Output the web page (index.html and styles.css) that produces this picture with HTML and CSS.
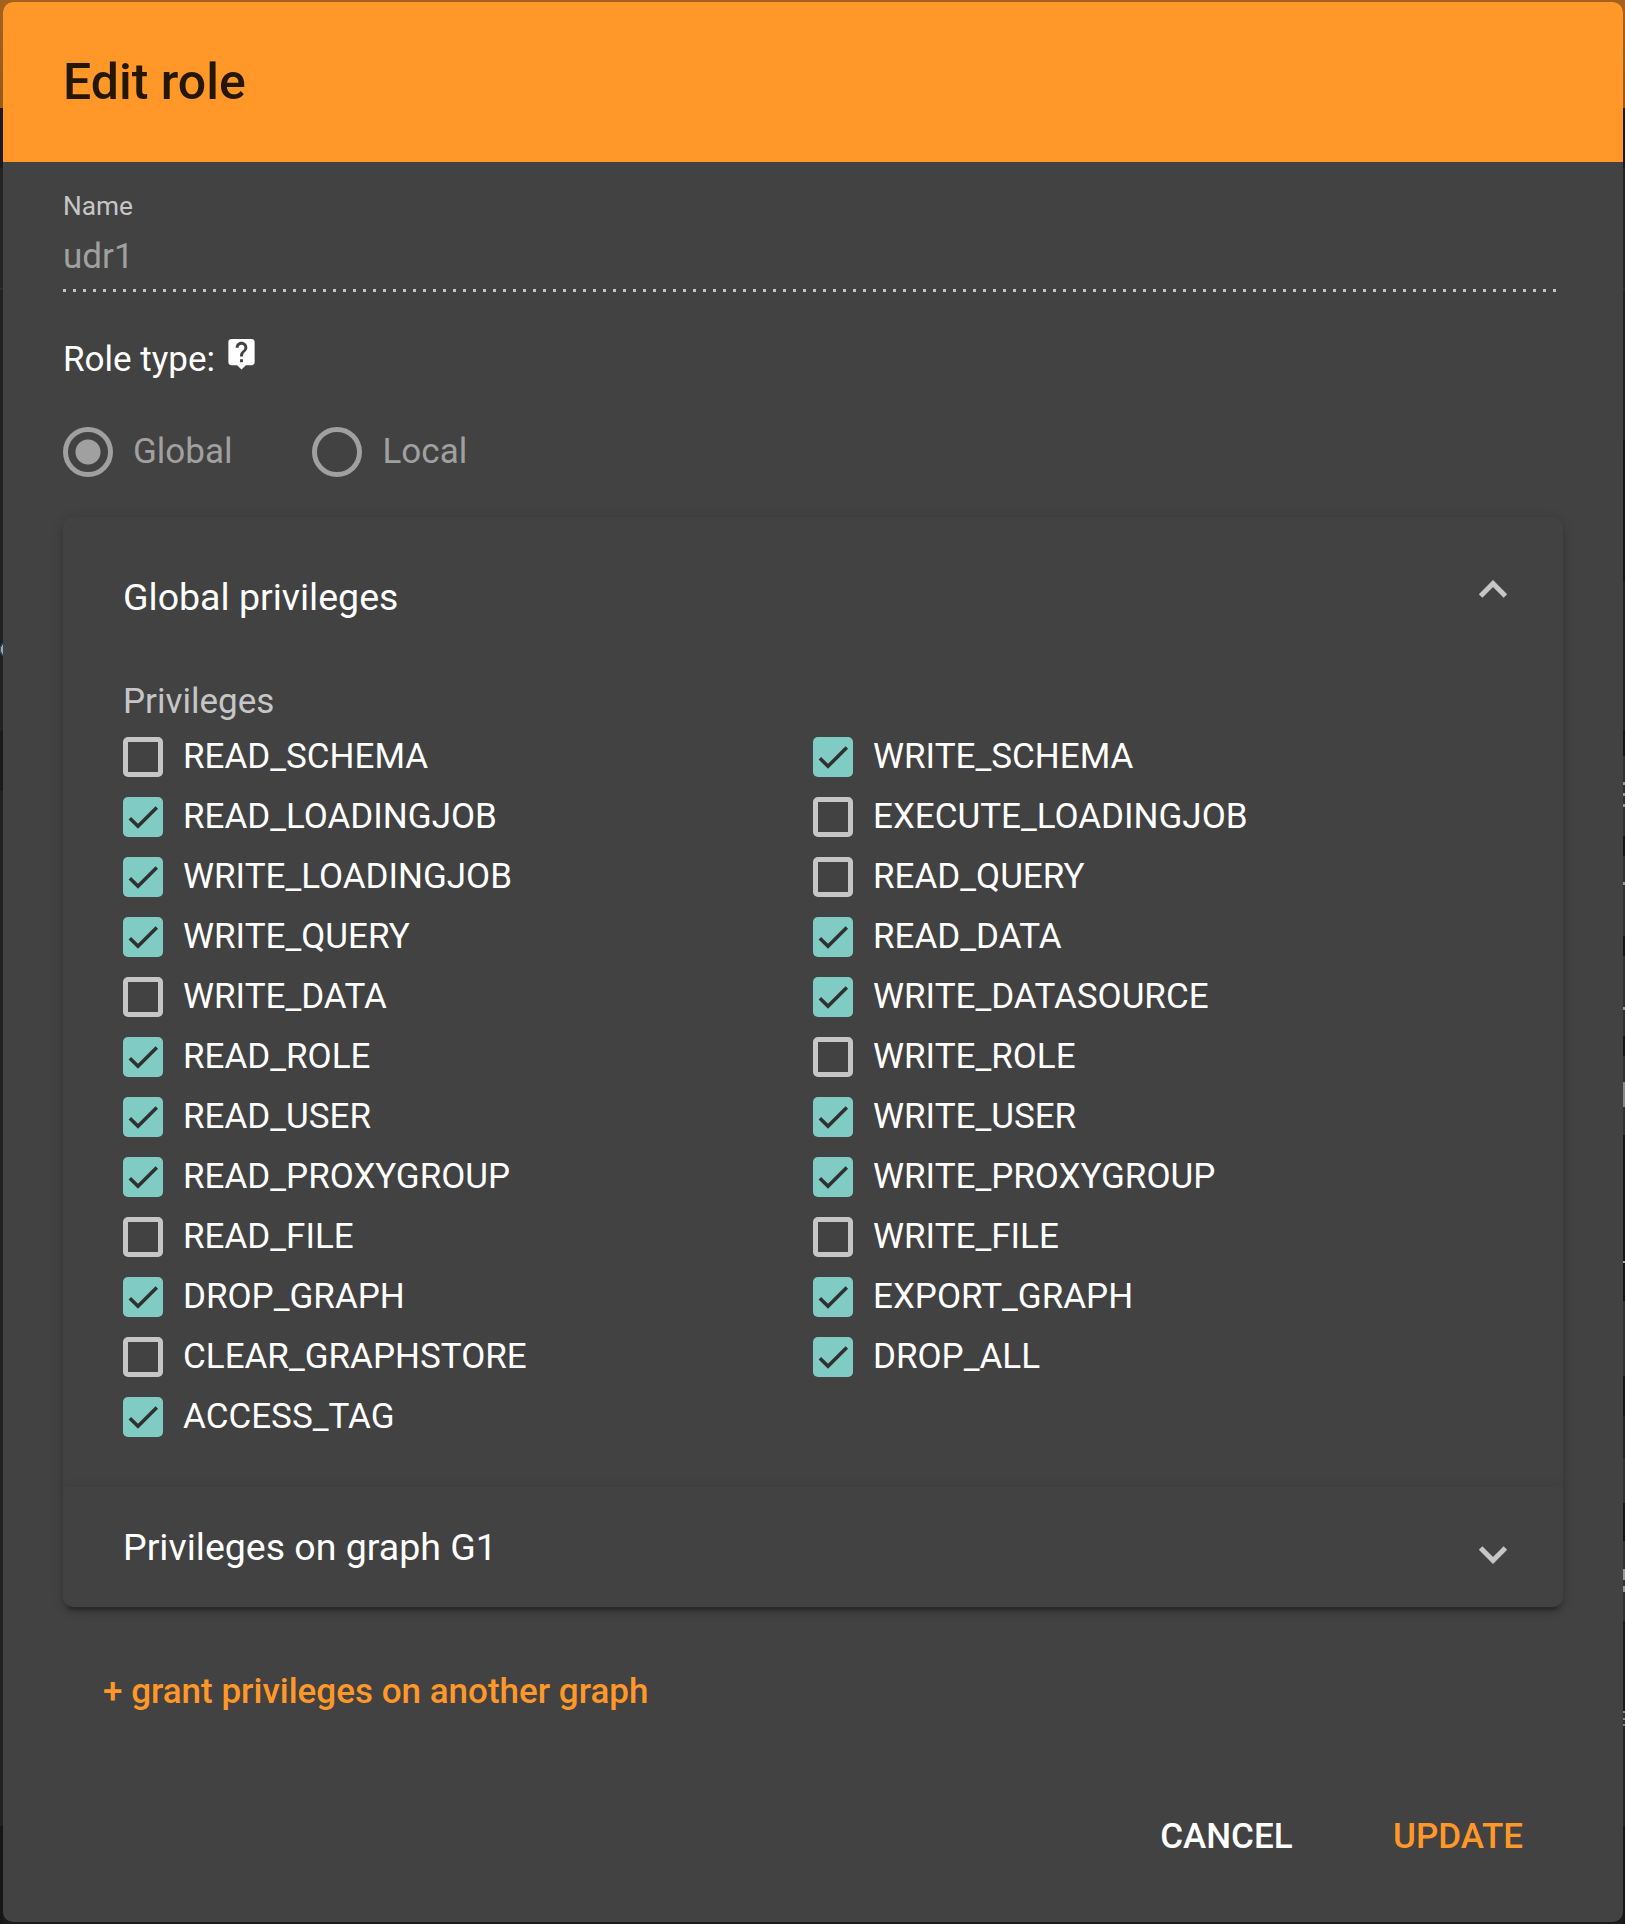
FILE: index.html
```html
<!DOCTYPE html>
<html lang="en">
<head>
<meta charset="utf-8">
<title>Edit role</title>
<link rel="stylesheet" href="styles.css">
</head>
<body>
<svg class="defs" aria-hidden="true">
  <symbol id="check" viewBox="0 0 24 24"><path d="M4.1 12.7 9 17.6 20.3 6.3" fill="none" stroke="#303030" stroke-width="2.13"/></symbol>
</svg>
<div class="backdrop-edge left"></div>
<main class="dialog">
  <header class="dialog-header"><h1>Edit role</h1></header>
  <div class="content">
    <div class="field">
      <label class="field-label">Name</label>
      <div class="field-value">udr1</div>
      <div class="field-underline"></div>
    </div>
    <div class="role-type">
      <span>Role type:</span>
      <svg class="help" viewBox="0 0 24 24"><path fill="#fff" d="M19 2H5c-1.11 0-2 .9-2 2v14c0 1.1.89 2 2 2h4l3 3 3-3h4c1.1 0 2-.9 2-2V4c0-1.1-.9-2-2-2zm-6 16h-2v-2h2v2zm2.07-7.75l-.9.92C13.45 11.9 13 12.5 13 14h-2v-.5c0-1.1.45-2.1 1.17-2.83l1.24-1.26c.37-.36.59-.86.59-1.41 0-1.1-.9-2-2-2s-2 .9-2 2H8c0-2.21 1.79-4 4-4s4 1.79 4 4c0 .88-.36 1.68-.93 2.25z"/></svg>
    </div>
    <div class="radios">
      <div class="radio"><span class="circle selected"></span><span>Global</span></div>
      <div class="radio"><span class="circle"></span><span>Local</span></div>
    </div>
    <section class="accordion">
      <div class="panel open">
        <div class="panel-header">
          <h2>Global privileges</h2>
          <svg class="chevron up" viewBox="0 0 30 18"><path d="M2.6 15.9 15 3.5 27.4 15.9"/></svg>
        </div>
        <div class="panel-body">
          <div class="caption">Privileges</div>
          <div class="grid">
            <div class="item"><span class="box"></span><span>READ_SCHEMA</span></div>
            <div class="item"><span class="box on"><svg><use href="#check"/></svg></span><span>WRITE_SCHEMA</span></div>
            <div class="item"><span class="box on"><svg><use href="#check"/></svg></span><span>READ_LOADINGJOB</span></div>
            <div class="item"><span class="box"></span><span>EXECUTE_LOADINGJOB</span></div>
            <div class="item"><span class="box on"><svg><use href="#check"/></svg></span><span>WRITE_LOADINGJOB</span></div>
            <div class="item"><span class="box"></span><span>READ_QUERY</span></div>
            <div class="item"><span class="box on"><svg><use href="#check"/></svg></span><span>WRITE_QUERY</span></div>
            <div class="item"><span class="box on"><svg><use href="#check"/></svg></span><span>READ_DATA</span></div>
            <div class="item"><span class="box"></span><span>WRITE_DATA</span></div>
            <div class="item"><span class="box on"><svg><use href="#check"/></svg></span><span>WRITE_DATASOURCE</span></div>
            <div class="item"><span class="box on"><svg><use href="#check"/></svg></span><span>READ_ROLE</span></div>
            <div class="item"><span class="box"></span><span>WRITE_ROLE</span></div>
            <div class="item"><span class="box on"><svg><use href="#check"/></svg></span><span>READ_USER</span></div>
            <div class="item"><span class="box on"><svg><use href="#check"/></svg></span><span>WRITE_USER</span></div>
            <div class="item"><span class="box on"><svg><use href="#check"/></svg></span><span>READ_PROXYGROUP</span></div>
            <div class="item"><span class="box on"><svg><use href="#check"/></svg></span><span>WRITE_PROXYGROUP</span></div>
            <div class="item"><span class="box"></span><span>READ_FILE</span></div>
            <div class="item"><span class="box"></span><span>WRITE_FILE</span></div>
            <div class="item"><span class="box on"><svg><use href="#check"/></svg></span><span>DROP_GRAPH</span></div>
            <div class="item"><span class="box on"><svg><use href="#check"/></svg></span><span>EXPORT_GRAPH</span></div>
            <div class="item"><span class="box"></span><span>CLEAR_GRAPHSTORE</span></div>
            <div class="item"><span class="box on"><svg><use href="#check"/></svg></span><span>DROP_ALL</span></div>
            <div class="item"><span class="box on"><svg><use href="#check"/></svg></span><span>ACCESS_TAG</span></div>
          </div>
        </div>
      </div>
      <div class="panel closed">
        <div class="panel-header">
          <h2>Privileges on graph G1</h2>
          <svg class="chevron down" viewBox="0 0 30 18"><path d="M2.6 2.1 15 14.5 27.4 2.1"/></svg>
        </div>
      </div>
    </section>
    <button class="btn grant">+ grant privileges on another graph</button>
  </div>
  <footer class="actions">
    <button class="btn cancel">CANCEL</button>
    <button class="btn update">UPDATE</button>
  </footer>
</main>
<div class="backdrop-edge right"></div>
</body>
</html>
```
FILE: styles.css
```css
* { box-sizing: border-box; }
body {
  margin: 0;
  width: 1625px;
  height: 1924px;
  overflow: hidden;
  display: flex;
  background: linear-gradient(#a5611e 0 2px, #965a1a 108px, #1a1a1a 108px);
  font-family: Roboto, sans-serif;
  font-size: 35px;
  line-height: 40px;
  color: #fff;
}
.defs { position: absolute; width: 0; height: 0; }
.backdrop-edge { height: 1924px; flex: none; }
.left {
  width: 3px;
  background: radial-gradient(ellipse 5px 8px at 5px 649.5px, #a5a5a5 0 75%, #24507a 80% 98%, transparent 100%),
    linear-gradient(transparent 108px, #1a1a1a 108px 168px, #242424 168px 288px, #2c2c2c 288px 290px, #212121 290px 731px, #1a1a1a 731px 791px, #212121 791px 1826px, #161616 1826px);
}
.right {
  width: 2px;
  background: linear-gradient(transparent 108px, #1a1a1a 108px 168px, #242424 168px 288px, #2c2c2c 288px 290px, #212121 290px 440px, #141414 440px 581px, #202020 581px 730px, #141414 730px 756px, #303030 756px 782px, #999 782px 785px, #303030 785px 793px, #999 793px 796px, #303030 796px 804px, #999 804px 807px, #303030 807px 836px, #141414 836px 856px, #303030 856px 882px, #999 882px 885px, #303030 885px 936px, #141414 936px 956px, #303030 956px 1007px, #999 1007px 1010px, #303030 1010px 1036px, #141414 1036px 1056px, #303030 1056px 1082px, #888 1082px 1107px, #303030 1107px 1135px, #141414 1135px 1261px, #aaa 1261px 1263px, #141414 1263px 1301px, #303030 1301px 1376px, #141414 1376px 1416px, #222 1416px 1458px, #303030 1458px 1503px, #141414 1503px 1541px, #303030 1541px 1569px, #999 1569px 1580px, #303030 1580px 1586px, #999 1586px 1592px, #303030 1592px 1621px, #1a1a1a 1621px 1711px, #888 1711px 1713px, #303030 1713px 1718px, #888 1718px 1720px, #303030 1720px 1724px, #888 1724px 1726px, #242424 1726px 1826px, #161616 1826px);
}
.dialog {
  width: 1620px;
  height: 1920px;
  margin-top: 2px;
  flex: none;
  display: flex;
  flex-direction: column;
  background: #424242;
  border-radius: 10px;
  overflow: hidden;
}
.dialog-header {
  height: 160px;
  flex: none;
  padding: 0 60px;
  display: flex;
  align-items: center;
  background: #ff9829;
}
h1 { margin: 0; font-size: 50px; line-height: 60px; font-weight: 500; color: #231603; }
.content { padding: 24px 60px 0; flex: 1; }
.field-label { display: block; font-size: 26.25px; color: #c6c6c6; }
.field-value { margin-top: 11px; color: #a0a0a0; }
.field-underline {
  height: 3px;
  margin-top: 12px;
  background: repeating-linear-gradient(90deg, #c6c6c6 0 3px, transparent 3px 10px);
}
.role-type { margin-top: 48px; display: flex; }
.help { width: 35px; height: 35px; margin: -4px 0 0 9px; }
.radios { display: flex; gap: 79px; margin-top: 47px; color: #a0a0a0; }
.radio { display: flex; gap: 20px; line-height: 50px; }
.radio + .radio { gap: 21px; }
.circle {
  width: 50px;
  height: 50px;
  border: 5px solid #a0a0a0;
  border-radius: 50%;
}
.selected { background: radial-gradient(circle at center, #a0a0a0 12px, transparent 13px); }
.accordion { margin-top: 40px; border-radius: 10px; }
.panel {
  background: #424242;
  box-shadow: 0 7.5px 2.5px -5px rgba(0,0,0,.2), 0 5px 5px rgba(0,0,0,.14), 0 2.5px 12.5px rgba(0,0,0,.12);
}
.open { border-radius: 10px 10px 0 0; }
.closed { border-radius: 0 0 10px 10px; }
.panel-header {
  height: 160px;
  padding: 0 55px 0 60px;
  display: flex;
  align-items: center;
  justify-content: space-between;
}
.closed .panel-header { height: 120px; }
h2 { margin: 0; font-size: 37.5px; font-weight: 400; }
.chevron { width: 30px; height: 18px; fill: none; stroke: #c6c6c6; stroke-width: 5; }
.up { margin-bottom: 16px; }
.down { margin-top: 15px; }
.panel-body { padding: 5px 60px 40px; }
.caption { color: #c6c6c6; margin-bottom: 5px; }
.grid { display: grid; grid-template-columns: 1fr 1fr; grid-auto-rows: 60px; }
.item { display: flex; align-items: center; gap: 20px; line-height: 40px; }
.box { width: 40px; height: 40px; border: 5px solid #c6c6c6; border-radius: 5px; }
.on { border: 0; background: #80cbc4; }
.box svg { display: block; width: 40px; height: 40px; }
.btn {
  height: 90px;
  padding: 0 40px;
  border: 0;
  background: none;
  font: 500 35px/90px Roboto, sans-serif;
  color: #ff9829;
}
.grant { display: block; margin-top: 40px; }
.actions { display: flex; justify-content: flex-end; gap: 20.5px; padding: 0 60px 40px; }
.cancel { color: #fff; }
```
